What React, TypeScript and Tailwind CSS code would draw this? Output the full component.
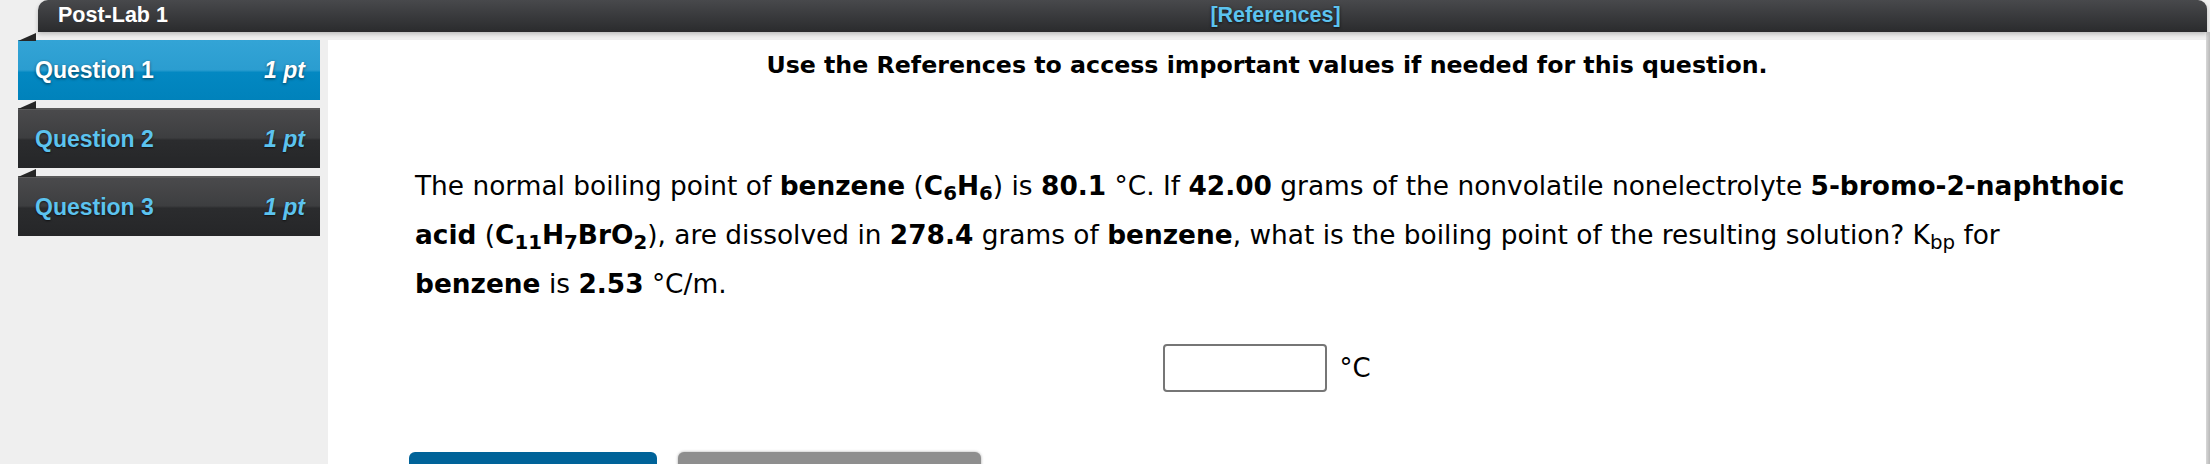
import React from "react";

const Notch = () => (
  <svg
    className="absolute left-0 top-[-7px]"
    width="18"
    height="8"
    viewBox="0 0 18 8"
  >
    <polygon points="0,8 18,0 18,8" fill="#262626" />
  </svg>
);

function Tab({ label, active }: { label: string; active?: boolean }) {
  return (
    <div className="relative shrink-0">
      <Notch />
      <div
        className={
          active
            ? "h-[60px] flex items-center justify-between pl-[17px] pr-[15px] bg-[linear-gradient(#33a4d6,#2b9dd0_50%,#0388c2_54%,#0082bb)] text-white [text-shadow:0_1px_3px_rgba(0,0,0,0.55)]"
            : "h-[60px] flex items-center justify-between pl-[17px] pr-[15px] border-t-2 border-[#5a5a5a] bg-[linear-gradient(#4a4a4c,#3d3e40_48%,#2b2c2e_52%,#252628)] text-[#5cc3ef] [text-shadow:0_1px_2px_rgba(0,0,0,0.6)]"
        }
        style={{ fontFamily: '"Liberation Sans", Arial, sans-serif' }}
      >
        <span className="text-[23px] font-bold">{label}</span>
        <span className="text-[23px] font-bold italic">1 pt</span>
      </div>
    </div>
  );
}

export default function App() {
  const sans = '"Liberation Sans", Arial, sans-serif';
  const dv = '"DejaVu Sans", Verdana, sans-serif';
  return (
    <div className="w-[2210px] h-[464px] bg-[#efefef] overflow-hidden flex flex-col">
      {/* top bar */}
      <div className="flex shrink-0 h-[32px] pl-[38px] pr-[3px] relative z-10">
        <div
          className="flex-1 flex items-center rounded-tl-[10px] rounded-tr-[9px] bg-[linear-gradient(#48494c,#2a2b2d)] shadow-[0_2px_4px_rgba(0,0,0,0.22)]"
          style={{ fontFamily: sans }}
        >
          <div className="w-[290px] pl-[20px] text-white font-bold text-[21.5px] leading-none">
            Post-Lab 1
          </div>
          <div className="flex-1 flex justify-center pl-[16px]">
            <span className="text-[#5cc3ef] font-bold text-[21.5px] leading-none [text-shadow:0_1px_3px_rgba(0,0,0,0.7)]">
              [References]
            </span>
          </div>
        </div>
      </div>

      {/* body */}
      <div className="flex flex-1 min-h-0 overflow-hidden">
        <div className="w-[328px] shrink-0 pl-[18px] pr-[8px] pt-[8px] flex flex-col gap-[8px]">
          <Tab label="Question 1" active />
          <Tab label="Question 2" />
          <Tab label="Question 3" />
        </div>

        <div className="flex-1 min-w-0 mt-[8px] bg-white text-black" style={{ fontFamily: dv }}>
          <div className="pt-[11px] text-center font-bold text-[23.7px] leading-[28px] whitespace-nowrap">
            Use the References to access important values if needed for this question.
          </div>

          <p className="mt-[82px] pl-[87px] text-[26.4px] leading-[49px] whitespace-nowrap">
            The normal boiling point of <b>benzene</b> (<b>C<sub>6</sub>H<sub>6</sub></b>) is{" "}
            <b>80.1</b> °C. If <b>42.00</b> grams of the nonvolatile nonelectrolyte{" "}
            <b>5-bromo-2-naphthoic</b>
            <br />
            <b>acid</b> (
            <b>
              C<sub>11</sub>H<sub>7</sub>BrO<sub>2</sub>
            </b>
            ), are dissolved in <b>278.4</b> grams of <b>benzene</b>, what is the boiling point
            of the resulting solution? K<sub>bp</sub> for
            <br />
            <b>benzene</b> is <b>2.53</b> °C/m.
          </p>

          <div className="mt-[36px] flex justify-center items-center gap-[12px]">
            <div className="w-[164px] h-[48px] shrink-0 rounded-[4px] border-2 border-[#767676] bg-white" />
            <span className="text-[26px]">°C</span>
          </div>

          <div className="mt-[60px] pl-[81px] flex gap-[21px]">
            <div className="w-[248px] h-[50px] shrink-0 rounded-t-[6px] bg-[#006399]" />
            <div className="w-[303px] h-[50px] shrink-0 rounded-t-[6px] bg-[#8e8e8e] shadow-[0_0_3px_rgba(0,0,0,0.35)]" />
          </div>
        </div>

        <div className="w-[4px] shrink-0 bg-[linear-gradient(90deg,#d8d8d8,#b8b8b8)]" />
      </div>
    </div>
  );
}
